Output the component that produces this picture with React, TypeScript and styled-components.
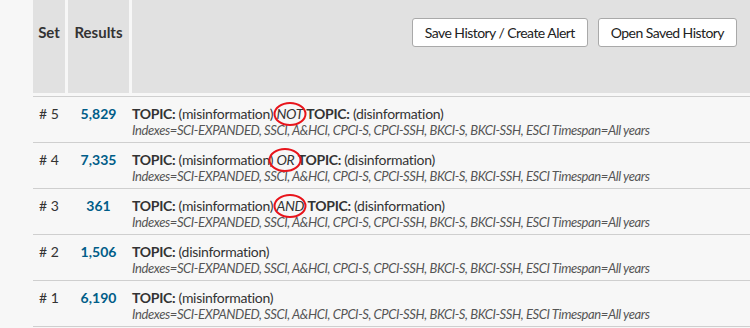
import React from "react";
import styled, { createGlobalStyle } from "styled-components";

const Global = createGlobalStyle`
  html, body { margin: 0; padding: 0; background: #f7f7f7; }
  body { font-family: "Lato", "Open Sans", sans-serif; color: #333; width: 750px; height: 328px; overflow: hidden; }
`;

const Page = styled.div`
  padding-left: 33px;
`;

const Header = styled.div`
  display: grid;
  grid-template-columns: 32px 61px 1fr;
  column-gap: 3px;
  height: 93px;
`;

const HeadCell = styled.div`
  background: #e1e1e1;
  font-weight: 700;
  font-size: 15px;
  text-align: center;
  padding-top: 23px;
  color: #333;
`;

const Toolbar = styled.div`
  background: #e1e1e1;
  display: flex;
  justify-content: flex-end;
  align-items: flex-start;
  gap: 10px;
  padding: 18px 13px 0 0;
`;

const Button = styled.button`
  height: 29px;
  padding: 0 12px;
  background: #fff;
  border: 1px solid #a9a9a9;
  border-radius: 3px;
  font-family: inherit;
  font-size: 14px;
  letter-spacing: -0.55px;
  color: #222;
`;

const Body = styled.div`
  margin-top: 3px;
  border-top: 1px solid #cfcfcf;
`;

const Row = styled.div`
  display: grid;
  grid-template-columns: 32px 61px 1fr;
  column-gap: 3px;
  border-bottom: 1px solid #cfcfcf;
  padding-top: 8px;
  box-sizing: border-box;
  height: 46px;
`;

const SetNo = styled.div`
  font-size: 14px;
  text-align: center;
  line-height: 17px;
  color: #333;
`;

const Count = styled.div`
  font-size: 14px;
  font-weight: 700;
  text-align: center;
  line-height: 17px;
  color: #005d88;
`;

const Query = styled.div`
  display: flex;
  flex-direction: column;
`;

const Title = styled.div`
  font-size: 14px;
  line-height: 17px;
  letter-spacing: -0.3px;
  color: #333;
  white-space: nowrap;
`;

const Field = styled.b`
  font-weight: 700;
`;

const Op = styled.i`
  position: relative;
  &::after {
    content: "";
    position: absolute;
    left: 50%;
    top: 50%;
    width: 29px;
    height: 20px;
    transform: translate(-50%, -50%);
    border: 2.5px solid #e8141b;
    border-radius: 50%;
  }
`;

const Meta = styled.div`
  font-size: 13px;
  font-style: italic;
  line-height: 16px;
  letter-spacing: -0.4px;
  color: #555;
  white-space: nowrap;
`;

const META =
  "Indexes=SCI-EXPANDED, SSCI, A&HCI, CPCI-S, CPCI-SSH, BKCI-S, BKCI-SSH, ESCI Timespan=All years";

type Item = { n: number; count: string; a: string; op?: string; b?: string };

const rows: Item[] = [
  { n: 5, count: "5,829", a: "misinformation", op: "NOT", b: "disinformation" },
  { n: 4, count: "7,335", a: "misinformation", op: "OR", b: "disinformation" },
  { n: 3, count: "361", a: "misinformation", op: "AND", b: "disinformation" },
  { n: 2, count: "1,506", a: "disinformation" },
  { n: 1, count: "6,190", a: "misinformation" },
];

export default function App() {
  return (
    <>
      <Global />
      <Page>
        <Header>
          <HeadCell>Set</HeadCell>
          <HeadCell>Results</HeadCell>
          <Toolbar>
            <Button>Save History / Create Alert</Button>
            <Button>Open Saved History</Button>
          </Toolbar>
        </Header>
        <Body>
          {rows.map((r) => (
            <Row key={r.n}>
              <SetNo># {r.n}</SetNo>
              <Count>{r.count}</Count>
              <Query>
                <Title>
                  <Field>TOPIC:</Field> ({r.a})
                  {r.op && (
                    <>
                      {" "}
                      <Op>{r.op}</Op> <Field>TOPIC:</Field> ({r.b})
                    </>
                  )}
                </Title>
                <Meta>{META}</Meta>
              </Query>
            </Row>
          ))}
        </Body>
      </Page>
    </>
  );
}
